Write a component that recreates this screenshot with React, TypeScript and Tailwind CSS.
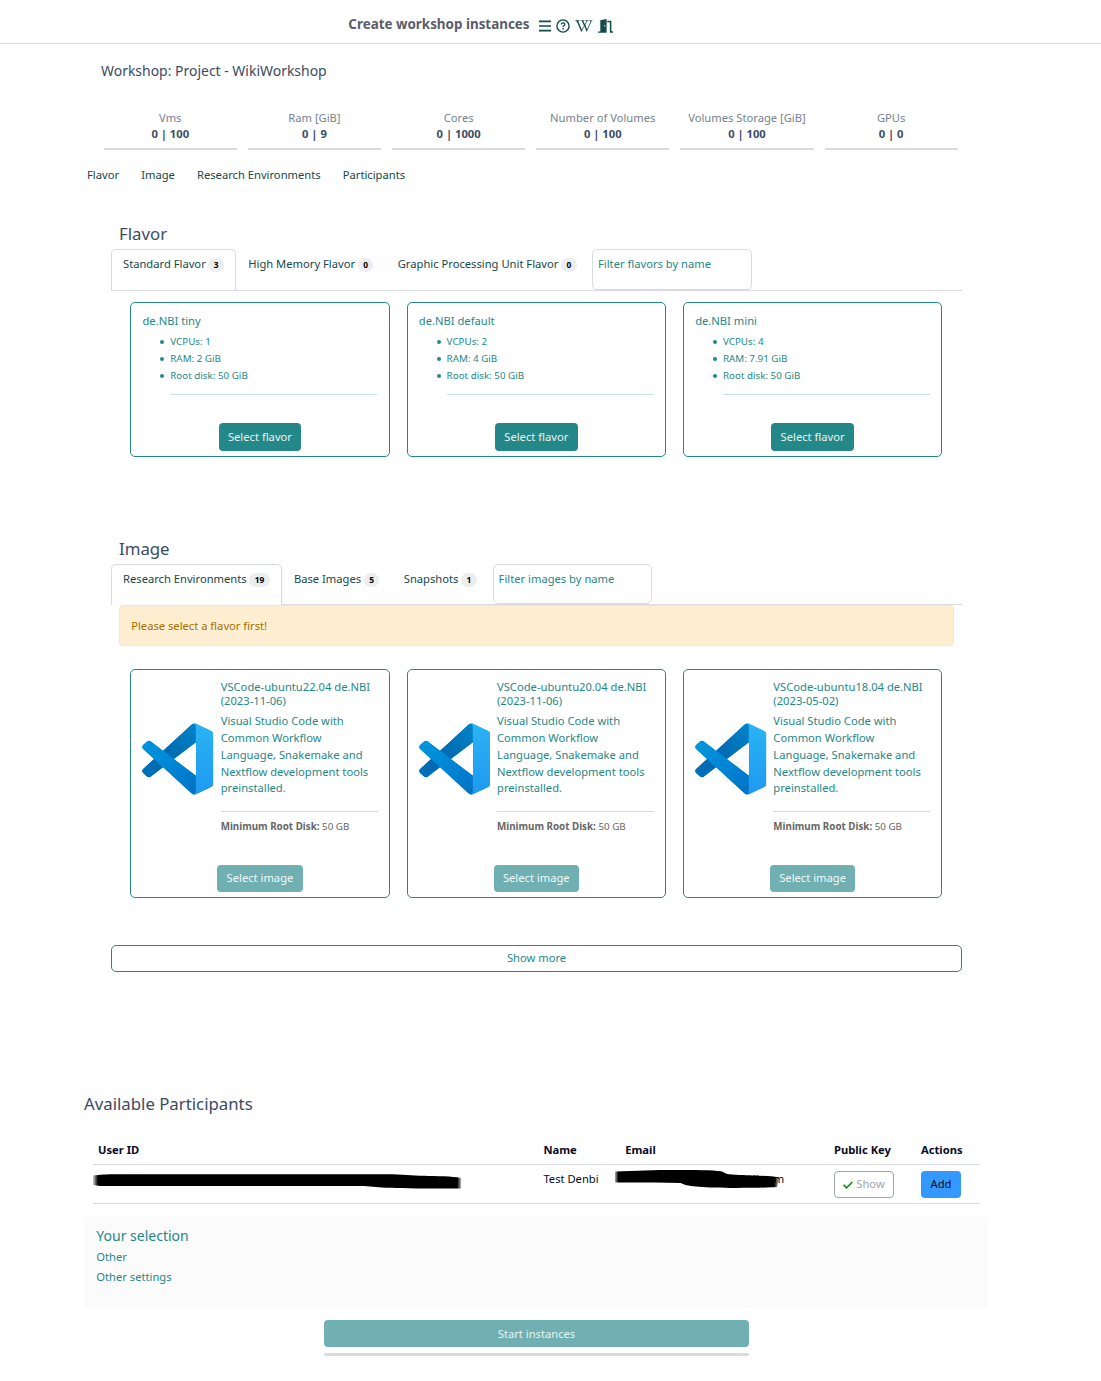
import React from "react";
import { FaWikipediaW } from "react-icons/fa";

const quotas = [
  ["Vms", "0 | 100"],
  ["Ram [GiB]", "0 | 9"],
  ["Cores", "0 | 1000"],
  ["Number of Volumes", "0 | 100"],
  ["Volumes Storage [GiB]", "0 | 100"],
  ["GPUs", "0 | 0"],
];

const flavors = [
  { name: "de.NBI tiny", cpus: "1", ram: "2 GiB" },
  { name: "de.NBI default", cpus: "2", ram: "4 GiB" },
  { name: "de.NBI mini", cpus: "4", ram: "7.91 GiB" },
];

const images = [
  { name: "VSCode-ubuntu22.04 de.NBI", date: "(2023-11-06)" },
  { name: "VSCode-ubuntu20.04 de.NBI", date: "(2023-11-06)" },
  { name: "VSCode-ubuntu18.04 de.NBI", date: "(2023-05-02)" },
];

function VSCodeLogo({ id }: { id: string }) {
  return (
    <svg viewBox="0 0 100 100" preserveAspectRatio="none" className="block h-[72px] w-[71.7px]">
      <defs>
        <mask id={`m${id}`} maskUnits="userSpaceOnUse" x="0" y="0" width="100" height="100">
          <path
            fill="#fff"
            fillRule="evenodd"
            d="M70.9119 99.3171C72.4869 99.9307 74.2828 99.8914 75.8725 99.1264L96.4608 89.2197C98.6242 88.1787 100 85.9892 100 83.5872V16.4133C100 14.0113 98.6243 11.8218 96.4609 10.7808L75.8725 0.873756C73.7862 -0.130129 71.3446 0.11576 69.5135 1.44695C69.252 1.63711 69.0028 1.84943 68.769 2.08341L29.3551 38.0415L12.1872 25.0096C10.589 23.7965 8.35363 23.8959 6.86933 25.2461L1.36303 30.2549C-0.452552 31.9064 -0.454633 34.7627 1.35853 36.417L16.2471 50.0001L1.35853 63.5832C-0.454633 65.2374 -0.452552 68.0938 1.36303 69.7453L6.86933 74.7541C8.35363 76.1043 10.589 76.2037 12.1872 74.9905L29.3551 61.9587L68.769 97.9167C69.3925 98.5406 70.1246 99.0104 70.9119 99.3171ZM75.0152 27.2989L45.1091 50.0001L75.0152 72.7012V27.2989Z"
          />
        </mask>
        <linearGradient id={`a${id}`} x1="0" y1="70" x2="75" y2="10" gradientUnits="userSpaceOnUse">
          <stop offset="0" stopColor="#0072bd" />
          <stop offset="0.35" stopColor="#0065ad" />
          <stop offset="1" stopColor="#0081c6" />
        </linearGradient>
        <linearGradient id={`b${id}`} x1="0" y1="25" x2="75" y2="95" gradientUnits="userSpaceOnUse">
          <stop offset="0" stopColor="#0096dc" />
          <stop offset="0.6" stopColor="#0083d3" />
          <stop offset="1" stopColor="#0072c5" />
        </linearGradient>
        <linearGradient id={`c${id}`} x1="0" y1="0" x2="0" y2="1">
          <stop offset="0" stopColor="#2ab4f5" />
          <stop offset="1" stopColor="#1f98f0" />
        </linearGradient>
      </defs>
      <g mask={`url(#m${id})`}>
        <path
          fill={`url(#a${id})`}
          d="M96.4614 10.7962L75.8569 0.875542C73.4719 -0.272773 70.6217 0.211611 68.75 2.08333L1.29858 63.5832C-0.515693 65.2373 -0.513607 68.0937 1.30308 69.7452L6.81272 74.754C8.29793 76.1042 10.5347 76.2036 12.1338 74.9905L93.3609 13.3699C96.086 11.3026 100 13.2462 100 16.6667V16.4275C100 14.0265 98.6246 11.8378 96.4614 10.7962Z"
        />
        <path
          fill={`url(#b${id})`}
          d="M96.4614 89.2038L75.8569 99.1245C73.4719 100.273 70.6217 99.7884 68.75 97.9167L1.29858 36.4169C-0.515693 34.7627 -0.513607 31.9063 1.30308 30.2548L6.81272 25.246C8.29793 23.8958 10.5347 23.7964 12.1338 25.0095L93.3609 86.6301C96.086 88.6974 100 86.7538 100 83.3334V83.5726C100 85.9735 98.6246 88.1622 96.4614 89.2038Z"
        />
        <path
          fill={`url(#c${id})`}
          d="M75.8578 99.1263C73.4721 100.274 70.6219 99.7885 68.75 97.9166C71.0564 100.223 75 98.5895 75 95.3278V4.67213C75 1.41039 71.0564 -0.223106 68.75 2.08329C70.6219 0.211402 73.4721 -0.273666 75.8578 0.873633L96.4587 10.7807C98.6234 11.8217 100 14.0112 100 16.4132V83.5871C100 85.9891 98.6234 88.1786 96.4586 89.2196L75.8578 99.1263Z"
        />
      </g>
    </svg>
  );
}

function Tab({ label, count, active }: { label: string; count: string; active?: boolean }) {
  return (
    <div
      className={
        active
          ? "-mb-px flex rounded-t-[5px] border border-b-0 border-[#d8dbe0] bg-white px-[11px] pt-[5px]"
          : "flex border border-b-0 border-transparent px-[11.2px] pt-[5px]"
      }
    >
      <span className="h-[17px] leading-[17px] text-[#12494b]">{label}</span>
      <span className="ml-[2.7px] mt-[3px] flex h-[14px] items-center rounded-full bg-[#ebedef] px-[5.4px] text-[8.4px] font-bold text-black">
        {count}
      </span>
    </div>
  );
}

function FilterInput({ label }: { label: string }) {
  return (
    <div className="h-full w-[159.5px] rounded-[5px] border border-[#d8dbe0] px-[4.8px] pt-[5px] leading-[17px] text-[#248888]">
      {label}
    </div>
  );
}

function ListItem({ children }: { children: React.ReactNode }) {
  return (
    <li className="flex items-center">
      <span className="-ml-[10px] mr-[6px] h-[4px] w-[4px] rounded-full bg-[#248888]" />
      <span>{children}</span>
    </li>
  );
}

export default function App() {
  return (
    <div className="h-[1381px] w-[1101px] overflow-hidden bg-white font-['Noto_Sans',sans-serif] text-[11.2px] leading-[16.8px] text-[#3c4b64]">
      <header className="flex h-[44px] items-center border-b border-[#d8dbe0] pl-[348.3px] pt-[4px]">
        <h1 className="w-[181.7px] whitespace-nowrap text-[13.42px] font-bold leading-[20px] text-[#5c5c6b]">
          Create workshop instances
        </h1>
        <div className="ml-[9px] mt-[5px] flex h-[14px] items-center text-[#12494b]">
          <svg viewBox="0 0 12 12" className="h-[12px] w-[12px]" stroke="currentColor" strokeWidth="1.7">
            <path d="M0 1.3H12M0 6H12M0 10.7H12" />
          </svg>
          <svg viewBox="0 0 14 14" className="ml-[5px] h-[14px] w-[14px]" fill="none" stroke="currentColor">
            <circle cx="7" cy="7" r="6.1" strokeWidth="1.4" />
            <path d="M5.2 5.4C5.3 4.3 6.1 3.9 7 3.9C8 3.9 8.8 4.5 8.8 5.4C8.8 6.6 7.1 6.6 7.1 8" strokeWidth="1.3" />
            <path d="M6.4 9.7H7.8" strokeWidth="1.4" />
          </svg>
          <FaWikipediaW className="ml-[5px] h-[14px] w-[18px]" />
          <svg viewBox="0 0 15 14" className="ml-[5px] h-[14px] w-[15px]">
            <path
              fill="currentColor"
              fillRule="evenodd"
              d="M2.3 1.3L8.6 0V13.8H0V12.4H2.3ZM6.2 6.2V7.6H7.2V6.2Z"
            />
            <path d="M9.2 2.4H12.6V13.1H15" fill="none" stroke="currentColor" strokeWidth="1.5" />
          </svg>
        </div>
      </header>

      <main className="ml-[84px] w-[904px]">
        <h2 className="h-[66px] pl-[17px] pt-[16px] text-[13.96px] leading-[22px]">Workshop: Project - WikiWorkshop</h2>

        <div className="ml-[19.7px] grid h-[40px] w-[854px] grid-cols-6 gap-[11px] text-center">
          {quotas.map(([label, value]) => (
            <div key={label} className="h-[40px] whitespace-nowrap border-b-2 border-[#d8dbe0]">
              <div className="h-[16px] leading-[16px] text-[#768192]">{label}</div>
              <div className="h-[16px] font-bold leading-[16px]">{value}</div>
            </div>
          ))}
        </div>

        <nav className="flex h-[67px] gap-[22.1px] pl-[3px] pt-[17px] text-[#12494b]">
          <a>Flavor</a>
          <a>Image</a>
          <a>Research Environments</a>
          <a>Participants</a>
        </nav>

        <section className="ml-[27px] h-[315px] w-[851px]">
          <h3 className="h-[32px] pl-[8px] pt-[5px] text-[16.8px] leading-[24px]">Flavor</h3>
          <div className="flex h-[42px] border-b border-[#d8dbe0]">
            <div className="mb-px flex">
              <Tab label="Standard Flavor" count="3" active />
            </div>
            <Tab label="High Memory Flavor" count="0" />
            <Tab label="Graphic Processing Unit Flavor" count="0" />
            <div className="ml-[3.4px]">
              <FilterInput label="Filter flavors by name" />
            </div>
          </div>
          <div className="ml-[19.3px] mt-[11px] grid w-[812px] grid-cols-3 gap-[17px]">
            {flavors.map((f) => (
              <article
                key={f.name}
                className="flex h-[155px] flex-col items-center rounded-[5px] border border-[#248888] px-[11.2px] pt-[10px] text-[#248888]"
              >
                <h4 className="h-[20px] w-full">{f.name}</h4>
                <ul className="w-full pl-[27.8px] text-[9.8px] leading-[17px]">
                  <ListItem>VCPUs: {f.cpus}</ListItem>
                  <ListItem>RAM: {f.ram}</ListItem>
                  <ListItem>Root disk: 50 GiB</ListItem>
                </ul>
                <div className="mt-[10px] w-full pl-[27.8px]">
                  <hr className="border-[#c8e1e1]" />
                </div>
                <button className="mt-[28px] h-[28px] w-[82.5px] rounded-[4px] bg-[#248888] text-[#e8f3f3]">
                  Select flavor
                </button>
              </article>
            ))}
          </div>
        </section>

        <section className="ml-[27px] h-[560px] w-[851px]">
          <h3 className="h-[32px] pl-[8px] pt-[5px] text-[16.8px] leading-[24px]">Image</h3>
          <div className="flex h-[41px] border-b border-[#d8dbe0]">
            <Tab label="Research Environments" count="19" active />
            <Tab label="Base Images" count="5" />
            <Tab label="Snapshots" count="1" />
            <div className="ml-[3.9px]">
              <FilterInput label="Filter images by name" />
            </div>
          </div>
          <div className="relative mx-[8px] h-[41px] rounded-[4px] border border-[#fde5ba] bg-[#feeed1] px-[11.2px] leading-[40px] text-[#a56f00]">
            Please select a flavor first!
          </div>
          <div className="ml-[19.3px] mt-[23px] grid w-[812px] grid-cols-3 gap-[17px]">
            {images.map((im, i) => (
              <article
                key={im.name}
                className="flex h-[229px] flex-col items-center rounded-[5px] border border-[#248888] px-[11.1px] pt-[10px] text-[#248888]"
              >
                <div className="flex h-[185px] w-full">
                  <div className="mt-[43px] w-[78.3px] shrink-0">
                    <VSCodeLogo id={String(i)} />
                  </div>
                  <div className="min-w-0 grow">
                    <h4 className="h-[33px] whitespace-nowrap leading-[14px]">
                      {im.name}
                      <br />
                      {im.date}
                    </h4>
                    <p className="h-[84px] whitespace-nowrap pt-[0.2px] leading-[16.8px]">
                      Visual Studio Code with
                      <br />
                      Common Workflow
                      <br />
                      Language, Snakemake and
                      <br />
                      Nextflow development tools
                      <br />
                      preinstalled.
                    </p>
                    <hr className="mt-[14px] border-[#d8dbe0]" />
                    <p className="mt-[7px] whitespace-nowrap text-[9.8px] text-[#666666]">
                      <b>Minimum Root Disk:</b> 50 GB
                    </p>
                  </div>
                </div>
                <button className="h-[27px] w-[85.4px] rounded-[4px] bg-[#70b0b2] text-[#f0f8f8]">Select image</button>
              </article>
            ))}
          </div>
          <button className="mt-[47px] block h-[27px] w-full rounded-[5px] border border-[#248888] text-[#248888]">
            Show more
          </button>
        </section>

        <section className="h-[124px]">
          <h3 className="h-[48px] text-[16.8px] leading-[24px]">Available Participants</h3>
          <div className="ml-[9px] w-[887px] text-[#080a26]">
            <div className="grid h-[25px] grid-cols-[445.4px_81.8px_208.8px_87px_64px] border-b border-[#d8dbe0] pl-[5px] pt-[2px] font-bold">
              <span>User ID</span>
              <span>Name</span>
              <span>Email</span>
              <span>Public Key</span>
              <span>Actions</span>
            </div>
            <div className="grid h-[39px] grid-cols-[445.4px_81.8px_208.8px_87px_64px] border-b border-[#d8dbe0] pl-[5px] pt-[6px]">
              <span className="relative">
                <svg className="absolute -left-[6px] -top-[2px] h-[22px] w-[372px]" viewBox="0 0 372 22">
                  <defs>
                    <linearGradient id="fadeId" x1="0" y1="0" x2="369" y2="0" gradientUnits="userSpaceOnUse">
                      <stop offset="0" stopOpacity="0" />
                      <stop offset="0.016" stopOpacity="1" />
                      <stop offset="0.99" stopOpacity="1" />
                      <stop offset="1" stopOpacity="0.3" />
                    </linearGradient>
                  </defs>
                  <path
                    d="M1 6.5C8 5.6 15 5.3 25 5.2L295 5.2C310 5.2 320 6.5 332 6.8C345 7.2 360 7.2 369 9V19.6H337C320 19.2 300 19 290 18.4L272 17H8L1 16Z"
                    fill="url(#fadeId)"
                  />
                </svg>
              </span>
              <span className="whitespace-nowrap">Test Denbi</span>
              <span className="relative">
                <span className="ml-[127.6px]">il.com</span>
                <svg className="absolute -left-[10.4px] -top-[2px] h-[22px] w-[172px]" viewBox="0 0 172 22">
                  <defs>
                    <linearGradient id="fadeMail" x1="0" y1="0" x2="164" y2="0" gradientUnits="userSpaceOnUse">
                      <stop offset="0" stopOpacity="0.3" />
                      <stop offset="0.02" stopOpacity="1" />
                      <stop offset="0.97" stopOpacity="1" />
                      <stop offset="1" stopOpacity="0.3" />
                    </linearGradient>
                  </defs>
                  <path
                    d="M0 2.5C20 1.4 40 0.9 60 0.9C80 0.9 98 1 106 2.2C109 3 110 4.6 114 5.2C122 6 134 6 140 6.6C150 7 158 7 164 8.4L162 18C150 19 100 19.6 84 17.8C76 17 70 16.6 66 14L40 13.6L0 13.6Z"
                    fill="url(#fadeMail)"
                  />
                </svg>
              </span>
              <span>
                <button className="flex h-[27px] w-[60px] items-center justify-center gap-[3px] rounded-[4px] border border-[#9da5b1] text-[#9da5b1]">
                  <svg viewBox="0 0 10 8" className="h-[8px] w-[10px] text-[#189018]" fill="none" stroke="currentColor" strokeWidth="1.7">
                    <path d="M0.6 3.8L3.6 6.8L9.4 1" />
                  </svg>
                  Show
                </button>
              </span>
              <span>
                <button className="h-[27px] w-[40px] rounded-[4px] bg-[#3399ff]">Add</button>
              </span>
            </div>
          </div>
        </section>

        <section className="h-[92px] rounded-[4px] bg-[#fbfbfb] px-[12.3px] pt-[8px] text-[#248888]">
          <h4 className="h-[25px] text-[14px] leading-[24px]">Your selection</h4>
          <p className="h-[20px]">Other</p>
          <p className="h-[20px]">Other settings</p>
        </section>

        <button className="ml-[240px] mt-[12px] block h-[27px] w-[425px] rounded-[4px] bg-[#70b0b2] pt-[1px] text-[#e6f3f3]">
          Start instances
        </button>
        <div className="ml-[240px] mt-[6px] h-[3px] w-[425px] rounded-[1px] bg-[#d8dbe0]" />
      </main>
    </div>
  );
}
